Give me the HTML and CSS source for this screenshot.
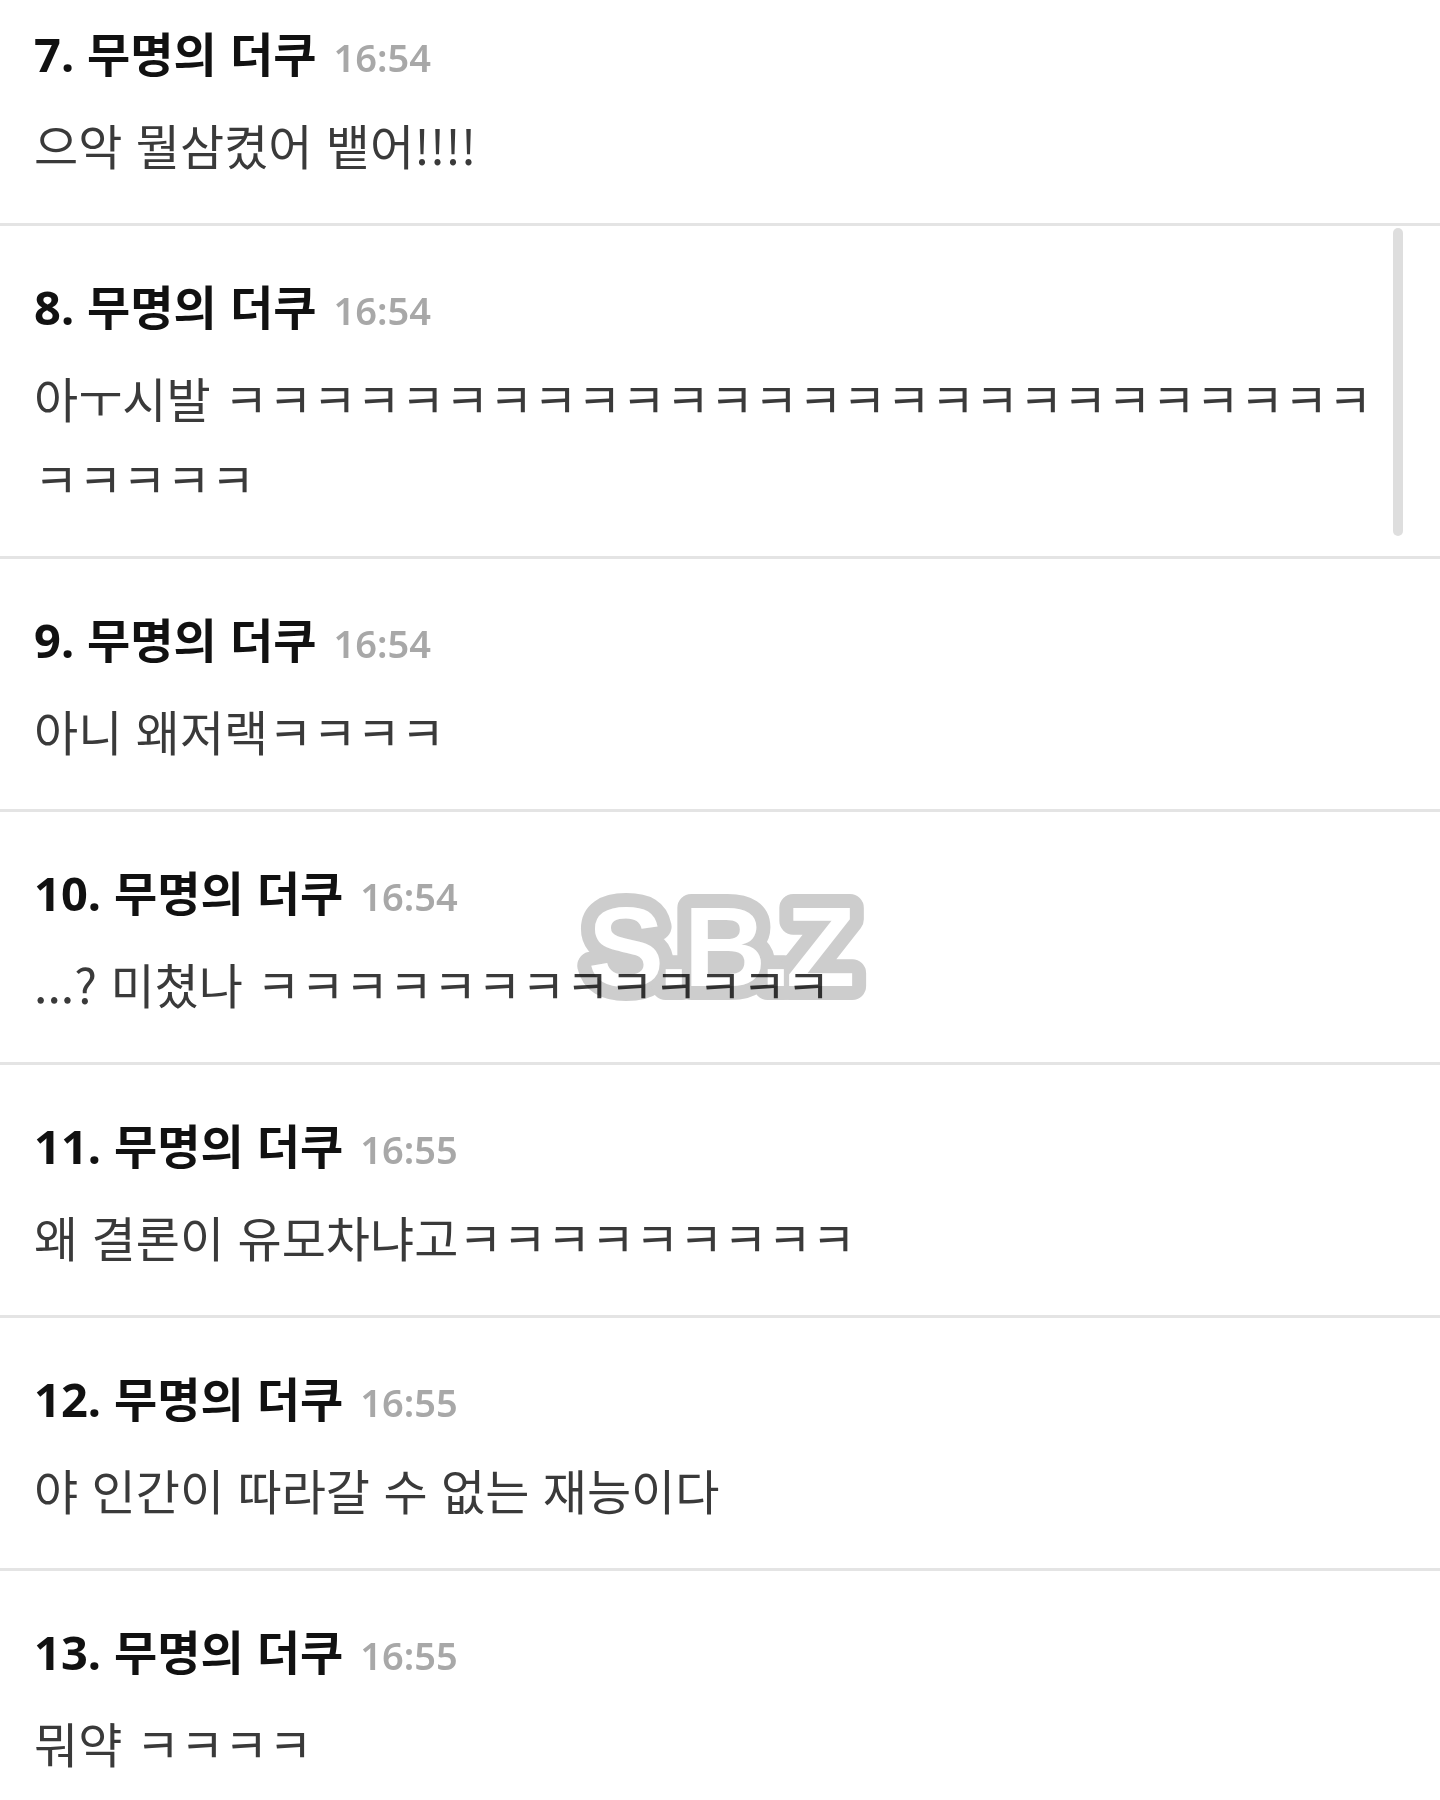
FILE: index.html
```html
<!DOCTYPE html>
<html lang="ko">

<head>
    <meta charset="UTF-8">
    <meta name="viewport" content="width=device-width, initial-scale=1.0">
    <title>댓글</title>
    <link rel="stylesheet" href="styles.css">
</head>

<body>
    <ul class="comments">
        <li class="comment">
            <div class="comment-head">
                <span class="comment-num">7.</span>
                <span class="comment-author">무명의 더쿠</span>
                <span class="comment-time">16:54</span>
            </div>
            <p class="comment-body">으악 뭘삼켰어 뱉어!!!!</p>
        </li>
        <li class="comment">
            <div class="comment-head">
                <span class="comment-num">8.</span>
                <span class="comment-author">무명의 더쿠</span>
                <span class="comment-time">16:54</span>
            </div>
            <p class="comment-body">아ㅜ시발 ㅋㅋㅋㅋㅋㅋㅋㅋㅋㅋㅋㅋㅋㅋㅋㅋㅋㅋㅋㅋㅋㅋㅋㅋㅋㅋㅋㅋㅋㅋㅋ</p>
            <span class="scroll-thumb"></span>
        </li>
        <li class="comment">
            <div class="comment-head">
                <span class="comment-num">9.</span>
                <span class="comment-author">무명의 더쿠</span>
                <span class="comment-time">16:54</span>
            </div>
            <p class="comment-body">아니 왜저랙ㅋㅋㅋㅋ</p>
        </li>
        <li class="comment">
            <div class="comment-head">
                <span class="comment-num">10.</span>
                <span class="comment-author">무명의 더쿠</span>
                <span class="comment-time">16:54</span>
            </div>
            <p class="comment-body">...? 미쳤나 ㅋㅋㅋㅋㅋㅋㅋㅋㅋㅋㅋㅋㅋ</p>
        </li>
        <li class="comment">
            <div class="comment-head">
                <span class="comment-num">11.</span>
                <span class="comment-author">무명의 더쿠</span>
                <span class="comment-time">16:55</span>
            </div>
            <p class="comment-body">왜 결론이 유모차냐고ㅋㅋㅋㅋㅋㅋㅋㅋㅋ</p>
        </li>
        <li class="comment">
            <div class="comment-head">
                <span class="comment-num">12.</span>
                <span class="comment-author">무명의 더쿠</span>
                <span class="comment-time">16:55</span>
            </div>
            <p class="comment-body">야 인간이 따라갈 수 없는 재능이다</p>
        </li>
        <li class="comment">
            <div class="comment-head">
                <span class="comment-num">13.</span>
                <span class="comment-author">무명의 더쿠</span>
                <span class="comment-time">16:55</span>
            </div>
            <p class="comment-body">뭐약 ㅋㅋㅋㅋ</p>
        </li>
    </ul>

    <!-- site watermark over the capture -->
    <svg class="watermark" width="310" height="135" viewBox="0 0 310 135">
        <text x="14" y="108">S.B.Z</text>
    </svg>
</body>

</html>
```

FILE: styles.css
```css
* {
    margin: 0;
    padding: 0;
    box-sizing: border-box;
}

body {
    font-family: "Noto Sans CJK KR", "Noto Sans", sans-serif;
    background: #fff;
    color: #111;
    width: 1440px;
    height: 1800px;
    overflow: hidden;
    position: relative;
}

.comments {
    list-style: none;
    margin-top: -27px;
}

.comment {
    position: relative;
    padding: 47px 55px 39px 34px;
    border-bottom: 3px solid #e4e4e4;
}

.comment-head {
    display: flex;
    align-items: baseline;
    height: 64px;
    line-height: 64px;
    white-space: nowrap;
}

.comment-num {
    font-family: "Noto Sans", "Noto Sans CJK KR", sans-serif;
    font-size: 47px;
    font-weight: 700;
    color: #111;
    margin-right: 13px;
}

.comment-author {
    font-size: 47px;
    font-weight: 700;
    color: #111;
    margin-right: 17px;
}

.comment-time {
    font-family: "Noto Sans", sans-serif;
    font-size: 38px;
    font-weight: 600;
    color: #a8a8a8;
}

.comment-body {
    margin-top: 20px;
    font-size: 48px;
    line-height: 80px;
    color: #3a3a3a;
}

.scroll-thumb {
    position: absolute;
    top: 2px;
    right: 37px;
    width: 10px;
    height: 308px;
    border-radius: 5px;
    background: #dedede;
}

.watermark {
    position: absolute;
    left: 574px;
    top: 878px;
    mix-blend-mode: multiply;
}

.watermark text {
    font-family: "Liberation Sans", sans-serif;
    font-size: 114px;
    font-weight: 700;
    letter-spacing: -6px;
    fill: #fff;
    stroke: #cdcdcd;
    stroke-width: 28px;
    stroke-linejoin: round;
    paint-order: stroke fill;
}
```
